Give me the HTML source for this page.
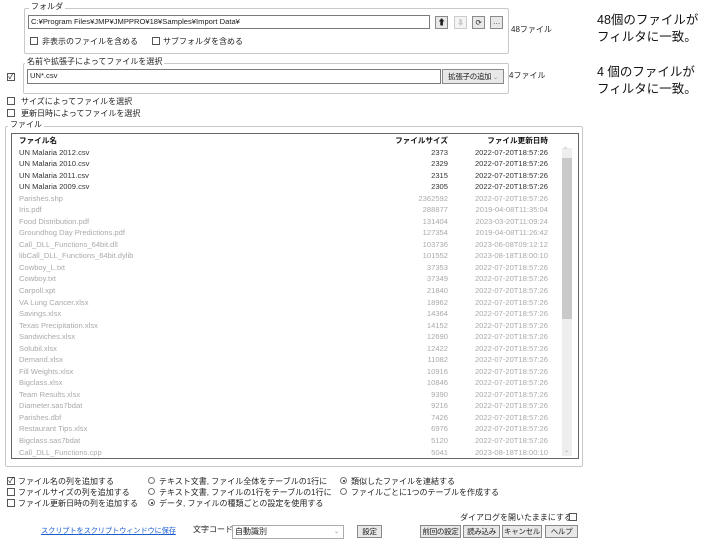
<!DOCTYPE html>
<html><head><meta charset="utf-8"><style>
*{margin:0;padding:0;box-sizing:border-box}
body{width:715px;height:544px;background:#fff;font-family:"Liberation Sans","Noto Sans CJK JP",sans-serif;font-size:8px;color:#222;position:relative;overflow:hidden}
.a{position:absolute;white-space:nowrap}
.box{position:absolute;border:1px solid #c8c8c8;border-radius:2px}
.lbl{position:absolute;background:#fff;padding:0 2px;font-size:8px;line-height:10px;white-space:nowrap}
.inp{position:absolute;border:1px solid #7a7a7a;background:#fff;font-size:8px;padding-left:2px;line-height:12px;white-space:nowrap}
.cb{position:absolute;width:8px;height:8px;border:1px solid #555;background:#fff;font-size:8px;line-height:6px;text-align:center}
.rb{position:absolute;width:7px;height:7px;border:1px solid #777;border-radius:50%;background:#fff}
.rb.on::after{content:"";position:absolute;left:1.5px;top:1.5px;width:2px;height:2px;border-radius:50%;background:#222}
.btn{position:absolute;border:1px solid #8a8a8a;background:#e8e8e8;font-size:7.5px;text-align:center;line-height:12px;white-space:nowrap;overflow:hidden;letter-spacing:-0.3px}
.row{position:absolute;left:19px;width:530px;height:11.54px;line-height:11.54px;font-size:7.6px;color:#333;white-space:nowrap}
.row.g{color:#aaa}
.row span{position:absolute}
.row .s{right:101px}
.row .d{right:1px}
.rt{position:absolute;left:597px;font-size:12.5px;line-height:17px;color:#111;white-space:nowrap}
</style></head><body>

<div class="box" style="left:24px;top:8px;width:485px;height:46px"></div>
<div class="lbl" style="left:29px;top:2px">フォルダ</div>
<div class="inp" style="left:28px;top:15px;width:402px;height:14px;font-size:7.6px">C:¥Program Files¥JMP¥JMPPRO¥18¥Samples¥Import Data¥</div>
<div class="btn" style="left:435px;top:16px;width:13px;height:13px;line-height:11px;font-size:8px">⬆</div>
<div class="btn" style="left:454px;top:16px;width:13px;height:13px;line-height:11px;color:#ccc;border-color:#ccc;background:#f4f4f4">⬇</div>
<div class="btn" style="left:472px;top:16px;width:13px;height:13px;line-height:11px">⟳</div>
<div class="btn" style="left:490px;top:16px;width:13px;height:13px;line-height:9px">…</div>
<div class="a" style="left:511px;top:24px">48ファイル</div>
<div class="cb" style="left:30px;top:37px"></div><div class="a" style="left:42px;top:36px">非表示のファイルを含める</div>
<div class="cb" style="left:152px;top:37px"></div><div class="a" style="left:163px;top:36px">サブフォルダを含める</div>

<div class="box" style="left:23px;top:63px;width:486px;height:31px"></div>
<div class="lbl" style="left:25px;top:57px">名前や拡張子によってファイルを選択</div>
<div class="cb" style="left:7px;top:73px">✓</div>
<div class="inp" style="left:27px;top:69px;width:414px;height:15px;font-size:7.6px">UN*.csv</div>
<div class="btn" style="left:442px;top:69px;width:62px;height:15px;line-height:13px">拡張子の追加 <span style="color:#888;font-size:6px">⌄</span></div>
<div class="a" style="left:509px;top:70px">4ファイル</div>

<div class="cb" style="left:7px;top:97px"></div><div class="a" style="left:21px;top:96px">サイズによってファイルを選択</div>
<div class="cb" style="left:7px;top:109px"></div><div class="a" style="left:21px;top:108px">更新日時によってファイルを選択</div>

<div class="box" style="left:5px;top:126px;width:578px;height:341px"></div>
<div class="lbl" style="left:8px;top:120px">ファイル</div>
<div style="position:absolute;left:11px;top:133px;width:568px;height:326px;border:1px solid #666;background:#fff"></div>
<div class="row" style="top:135px;font-weight:bold;color:#111"><span style="left:0">ファイル名</span><span class="s">ファイルサイズ</span><span class="d">ファイル更新日時</span></div>
<div style="position:absolute;left:562px;top:148px;width:10px;height:308px;background:#eee"></div>
<div style="position:absolute;left:562px;top:158px;width:10px;height:161px;background:#c9c9c9"></div>
<div class="a" style="left:564px;top:147px;color:#aaa;font-size:6px">^</div>
<div class="a" style="left:564px;top:447px;color:#aaa;font-size:6px">⌄</div>

<div id="rows"></div>
<script>
var d=[["UN Malaria 2012.csv",2373,"2022-07-20T18:57:26",0],["UN Malaria 2010.csv",2329,"2022-07-20T18:57:26",0],["UN Malaria 2011.csv",2315,"2022-07-20T18:57:26",0],["UN Malaria 2009.csv",2305,"2022-07-20T18:57:26",0],
["Parishes.shp",2362592,"2022-07-20T18:57:26"],["Iris.pdf",288877,"2019-04-08T11:35:04"],["Food Distribution.pdf",131404,"2023-03-20T11:09:24"],["Groundhog Day Predictions.pdf",127354,"2019-04-08T11:26:42"],
["Call_DLL_Functions_64bit.dll",103736,"2023-06-08T09:12:12"],["libCall_DLL_Functions_64bit.dylib",101552,"2023-08-18T18:00:10"],["Cowboy_L.txt",37353,"2022-07-20T18:57:26"],["Cowboy.txt",37349,"2022-07-20T18:57:26"],
["Carpoll.xpt",21840,"2022-07-20T18:57:26"],["VA Lung Cancer.xlsx",18962,"2022-07-20T18:57:26"],["Savings.xlsx",14364,"2022-07-20T18:57:26"],["Texas Precipitation.xlsx",14152,"2022-07-20T18:57:26"],
["Sandwiches.xlsx",12690,"2022-07-20T18:57:26"],["Solubil.xlsx",12422,"2022-07-20T18:57:26"],["Demand.xlsx",11082,"2022-07-20T18:57:26"],["Fill Weights.xlsx",10916,"2022-07-20T18:57:26"],
["Bigclass.xlsx",10846,"2022-07-20T18:57:26"],["Team Results.xlsx",9390,"2022-07-20T18:57:26"],["Diameter.sas7bdat",9216,"2022-07-20T18:57:26"],["Parishes.dbf",7426,"2022-07-20T18:57:26"],
["Restaurant Tips.xlsx",6976,"2022-07-20T18:57:26"],["Bigclass.sas7bdat",5120,"2022-07-20T18:57:26"],["Call_DLL_Functions.cpp",5041,"2023-08-18T18:00:10"]];
var h="";for(var i=0;i<d.length;i++){var t=146.5+i*11.54;h+='<div class="row'+(i>3?' g':'')+'" style="top:'+t+'px"><span style="left:0">'+d[i][0]+'</span><span class="s">'+d[i][1]+'</span><span class="d">'+d[i][2]+'</span></div>';}
document.getElementById("rows").innerHTML=h;
</script>

<div class="rt" style="top:12px">48個のファイルが<br>フィルタに一致。</div>
<div class="rt" style="top:64px">4 個のファイルが<br>フィルタに一致。</div>

<div class="cb" style="left:7px;top:477px">✓</div><div class="a" style="left:18px;top:476px">ファイル名の列を追加する</div>
<div class="cb" style="left:7px;top:488px"></div><div class="a" style="left:18px;top:487px">ファイルサイズの列を追加する</div>
<div class="cb" style="left:7px;top:499px"></div><div class="a" style="left:18px;top:498px">ファイル更新日時の列を追加する</div>
<div class="rb" style="left:148px;top:477px"></div><div class="a" style="left:159px;top:476px">テキスト文書, ファイル全体をテーブルの1行に</div>
<div class="rb" style="left:148px;top:488px"></div><div class="a" style="left:159px;top:487px">テキスト文書, ファイルの1行をテーブルの1行に</div>
<div class="rb on" style="left:148px;top:499px"></div><div class="a" style="left:159px;top:498px">データ, ファイルの種類ごとの設定を使用する</div>
<div class="rb on" style="left:340px;top:477px"></div><div class="a" style="left:351px;top:476px">類似したファイルを連結する</div>
<div class="rb" style="left:340px;top:488px"></div><div class="a" style="left:351px;top:487px">ファイルごとに1つのテーブルを作成する</div>

<div class="a" style="left:460px;top:512px">ダイアログを開いたままにする</div>
<div class="cb" style="left:569px;top:513px"></div>

<div class="a" style="left:41px;top:526px;color:#1a5fd0;text-decoration:underline;font-size:7.3px;letter-spacing:-0.2px">スクリプトをスクリプトウィンドウに保存</div>
<div class="a" style="left:193px;top:524px">文字コード</div>
<div class="inp" style="left:232px;top:525px;width:112px;height:14px;border-color:#aaa">自動識別<span style="position:absolute;right:4px;color:#888;font-size:6px">⌄</span></div>
<div class="btn" style="left:357px;top:525px;width:25px;height:13px">設定</div>
<div class="btn" style="left:420px;top:525px;width:41px;height:13px">前回の設定</div>
<div class="btn" style="left:463px;top:525px;width:37px;height:13px">読み込み</div>
<div class="btn" style="left:502px;top:525px;width:40px;height:13px">キャンセル</div>
<div class="btn" style="left:545px;top:525px;width:33px;height:13px">ヘルプ</div>
</body></html>
